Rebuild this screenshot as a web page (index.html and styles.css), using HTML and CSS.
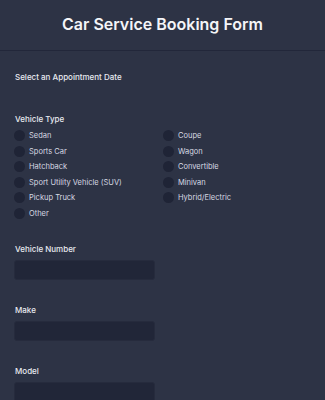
FILE: index.html
```html
<!doctype html>
<html>
<head>
  <title>Car Service Booking Form</title>
  <meta charset="utf-8">
  <link rel="stylesheet" href="styles.css">
</head>
<body>
  <div class="header">
    <h1>Car Service Booking Form</h1>
  </div>
  <div class="form">
    <div class="field date">
      <label class="label">Select an Appointment Date</label>
    </div>
    <div class="field">
      <label class="label">Vehicle Type</label>
      <div class="choices">
        <label class="choice"><span class="radio"></span>Sedan</label>
        <label class="choice"><span class="radio"></span>Coupe</label>
        <label class="choice"><span class="radio"></span>Sports Car</label>
        <label class="choice"><span class="radio"></span>Wagon</label>
        <label class="choice"><span class="radio"></span>Hatchback</label>
        <label class="choice"><span class="radio"></span>Convertible</label>
        <label class="choice"><span class="radio"></span>Sport Utility Vehicle (SUV)</label>
        <label class="choice"><span class="radio"></span>Minivan</label>
        <label class="choice"><span class="radio"></span>Pickup Truck</label>
        <label class="choice"><span class="radio"></span>Hybrid/Electric</label>
        <label class="choice"><span class="radio"></span>Other</label>
      </div>
    </div>
    <div class="field">
      <label class="label">Vehicle Number</label>
      <div class="input"></div>
    </div>
    <div class="field">
      <label class="label">Make</label>
      <div class="input"></div>
    </div>
    <div class="field">
      <label class="label">Model</label>
      <div class="input"></div>
    </div>
  </div>
</body>
</html>
```

FILE: styles.css
```css
body{
  margin: 0;
  background-color: #2d3345;
  font-family: Inter, "Noto Sans", sans-serif;
  color: #e8eaf0;
}
.header{
  height: 50px;
  border-bottom: 1px solid #22273a;
  display: flex;
  justify-content: center;
  align-items: center;
}
h1{
  margin: 0;
  margin-top: -2px;
  font-size: 16px;
  font-weight: 600;
  color: #f4f5f8;
}
.form{
  padding: 19px 14px 0 14px;
}
.field{
  margin-bottom: 23px;
}
.field.date{
  margin-bottom: 28px;
}
.label{
  display: block;
  font-size: 8px;
  font-weight: 500;
  line-height: 14px;
  margin-bottom: 4px;
  padding-left: 1px;
}
.choices{
  display: grid;
  grid-template-columns: 149px 149px;
  row-gap: 4.5px;
}
.choice{
  display: flex;
  align-items: center;
  font-size: 7.5px;
  line-height: 11px;
  color: #d6d9e2;
}
.radio{
  width: 11px;
  height: 11px;
  border-radius: 50%;
  background-color: #1f2436;
  margin-right: 4px;
}
.input{
  width: 141px;
  height: 20px;
  border: 1px solid #262b3d;
  box-sizing: border-box;
  border-radius: 3px;
  background-color: #212638;
}
```
